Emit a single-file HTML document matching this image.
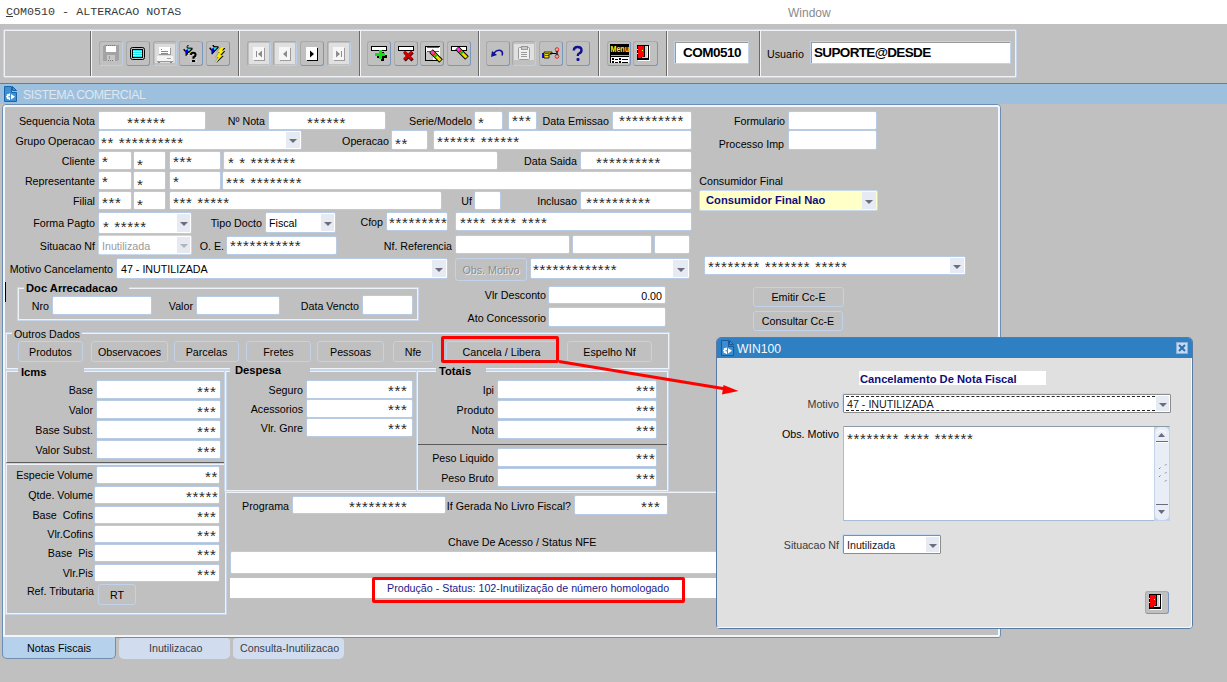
<!DOCTYPE html><html><head><meta charset="utf-8"><style>
*{margin:0;padding:0;box-sizing:border-box}
body{width:1227px;height:682px;overflow:hidden;background:#c0c0c0;position:relative;font-family:"Liberation Sans",sans-serif;font-size:10.7px;color:#000}
div{position:absolute}
.lb,.tx{white-space:pre;line-height:13px;font-size:10.7px}
.b{font-weight:bold;font-size:11.2px}
.st{white-space:pre;line-height:13px;font-size:15px;letter-spacing:0.65px;color:#2a2a2a}
.fd{background:#fff;border:1px solid #b7cbe4;border-radius:2px}
.ar{background:#e6eaf2}
.ar i{position:absolute;left:50%;top:50%;margin-left:-4px;margin-top:-1px;width:0;height:0;border-left:4px solid transparent;border-right:4px solid transparent;border-top:4px solid #6c6c7c}
.bt{border:1px solid #c0d3ea;border-radius:3px;text-align:center;white-space:pre;font-size:10.7px}
.tb{border:1px solid;border-color:#a9a9a9 #bccfe7 #bccfe7 #a9a9a9;border-radius:3px}
.tb.en{border-color:#a9a9a9 #7a98bd #7a98bd #a9a9a9}
.sep{width:2px;background:#6e6e6e;border-right:1px solid #f0f0f0}
.frl{border:1px solid #eef3fa;box-shadow:0 0 0 1px #c7d6ea}
</style></head><body>
<div class="" style="left:0px;top:0px;width:1227px;height:24px;background:#fff"></div>
<div style="left:6px;top:4px;font:11.7px 'Liberation Mono';line-height:16px;white-space:pre;color:#3a3a3a"><span style="text-decoration:underline">C</span>OM0510 - ALTERACAO NOTAS</div>
<div style="left:788px;top:6px;font-size:12px;line-height:15px;color:#8a8a8a">Window</div>
<div class="" style="left:3px;top:29px;width:1014px;height:49px;border:1px solid #c6d6ec;border-radius:2px"></div>
<div class="" style="left:4px;top:30px;width:1012px;height:47px;border:1px solid #eef2f8"></div>
<div style="left:90px;top:31px;width:1px;height:45px;background:#6a6a6a"></div><div style="left:91px;top:31px;width:1px;height:45px;background:#f4f4f4"></div>
<div style="left:238px;top:31px;width:1px;height:45px;background:#6a6a6a"></div><div style="left:239px;top:31px;width:1px;height:45px;background:#f4f4f4"></div>
<div style="left:359px;top:31px;width:1px;height:45px;background:#6a6a6a"></div><div style="left:360px;top:31px;width:1px;height:45px;background:#f4f4f4"></div>
<div style="left:478px;top:31px;width:1px;height:45px;background:#6a6a6a"></div><div style="left:479px;top:31px;width:1px;height:45px;background:#f4f4f4"></div>
<div style="left:598px;top:31px;width:1px;height:45px;background:#6a6a6a"></div><div style="left:599px;top:31px;width:1px;height:45px;background:#f4f4f4"></div>
<div style="left:666px;top:31px;width:1px;height:45px;background:#6a6a6a"></div><div style="left:667px;top:31px;width:1px;height:45px;background:#f4f4f4"></div>
<div style="left:759px;top:31px;width:1px;height:45px;background:#6a6a6a"></div><div style="left:760px;top:31px;width:1px;height:45px;background:#f4f4f4"></div>
<div class="tb" style="left:99px;top:41px;width:24px;height:25px"><svg style="position:absolute;left:-1px;top:-1px" width="24" height="25" shape-rendering="crispEdges">
<rect x="4" y="4" width="16" height="16" fill="#a3a3a3"/>
<rect x="4" y="4" width="1" height="1" fill="#c0c0c0"/><rect x="19" y="19" width="1" height="1" fill="#c0c0c0"/>
<rect x="7" y="5" width="10" height="6" fill="#fff"/>
<rect x="7" y="4" width="1" height="1" fill="#777"/><rect x="9" y="4" width="1" height="1" fill="#777"/><rect x="11" y="4" width="1" height="1" fill="#777"/><rect x="13" y="4" width="1" height="1" fill="#777"/><rect x="15" y="4" width="1" height="1" fill="#777"/>
<rect x="8" y="14" width="8" height="6" fill="#c6c6c6"/>
<rect x="10" y="15" width="1" height="3" fill="#9a9a9a"/>
<rect x="9" y="19" width="1" height="1" fill="#777"/><rect x="11" y="19" width="1" height="1" fill="#777"/><rect x="13" y="19" width="1" height="1" fill="#777"/>
</svg></div>
<div class="tb en" style="left:126px;top:41px;width:24px;height:25px"><svg style="position:absolute;left:-1px;top:-1px" width="24" height="25" shape-rendering="crispEdges">
<rect x="4.5" y="6.5" width="14" height="12" rx="2" fill="#c0c0c0" stroke="#000" shape-rendering="auto"/>
<rect x="6" y="8" width="11" height="9" fill="#000"/>
<rect x="7" y="9" width="9" height="7" fill="#18e8f0"/>
<path d="M7 10h9M7 12h9M7 14h9" stroke="#c8f0f4" stroke-width="1"/>
</svg></div>
<div class="tb" style="left:153px;top:41px;width:24px;height:25px"><svg style="position:absolute;left:-1px;top:-1px" width="24" height="25" shape-rendering="crispEdges">
<rect x="2" y="3" width="20" height="19" fill="#dcdcdc"/>
<rect x="6" y="6" width="11" height="8" fill="#fff"/>
<rect x="17" y="7" width="1" height="7" fill="#9a9a9a"/><rect x="6" y="13" width="12" height="1" fill="#9a9a9a"/>
<rect x="8" y="8" width="1" height="1" fill="#888"/><rect x="8" y="10" width="7" height="1" fill="#888"/><rect x="8" y="12" width="7" height="1" fill="#888"/>
<rect x="4" y="15" width="16" height="5" fill="#f4f4f4"/>
<rect x="4" y="20" width="16" height="1" fill="#9a9a9a"/>
<rect x="5" y="21" width="2" height="1" fill="#888"/><rect x="17" y="21" width="2" height="1" fill="#888"/>
<rect x="14" y="17" width="4" height="1" fill="#a0a0a0"/>
</svg></div>
<div class="tb en" style="left:179px;top:41px;width:24px;height:25px"><svg style="position:absolute;left:-1px;top:-1px" width="24" height="25" shape-rendering="crispEdges"><g transform="translate(6.3,8.2)">
<g shape-rendering="auto">
<path d="M-1.6 0 L0.2 2.2" stroke="#000" stroke-width="1.4"/>
<path d="M1.2 -2.2 L2.8 -2.2" stroke="#000" stroke-width="1.2"/>
<polygon points="-0.3,1.6 2.2,-0.3 3.8,2.6 0.4,6.2" fill="#0000f0"/>
<polygon points="1.8,-0.9 7.2,-0.7 3.8,2.6" fill="#00f0f8"/>
<path d="M0.4 6.4 L7.2 -0.7 M1.8 -1.2 L7.2 -1" stroke="#000" stroke-width="1.1"/>
</g>

<rect x="2" y="-4" width="1.2" height="1.2" fill="#f00"/>
</g>
<g fill="#ffee00">
<rect x="9" y="12" width="1" height="1"/><rect x="11" y="11" width="1" height="1"/><rect x="17" y="12" width="1" height="1"/>
<rect x="9" y="14" width="1" height="1"/><rect x="11" y="14" width="1" height="1"/><rect x="15" y="14" width="1" height="1"/><rect x="17" y="14" width="1" height="1"/>
<rect x="9" y="16" width="1" height="1"/><rect x="11" y="16" width="1" height="1"/><rect x="15" y="16" width="1" height="1"/><rect x="17" y="16" width="1" height="1"/>
<rect x="11" y="18" width="1" height="1"/><rect x="15" y="18" width="1" height="1"/><rect x="17" y="18" width="1" height="1"/>
<rect x="11" y="20" width="1" height="1"/><rect x="13" y="20" width="1" height="1"/><rect x="15" y="20" width="1" height="1"/><rect x="17" y="20" width="1" height="1"/>
</g>
<path d="M11.8 13.8 Q12 11.8 14.2 11.8 Q16.6 11.8 16.6 13.8 Q16.6 15.3 14.5 16.2 L14.5 17.8" fill="none" stroke="#000" stroke-width="2.1" shape-rendering="auto"/>
<rect x="13" y="19" width="3" height="2" fill="#000"/>
</svg></div>
<div class="tb en" style="left:206px;top:41px;width:24px;height:25px"><svg style="position:absolute;left:-1px;top:-1px" width="24" height="25" shape-rendering="crispEdges"><g transform="translate(5.3,6.8)">
<g shape-rendering="auto">
<path d="M-1.6 0 L0.2 2.2" stroke="#000" stroke-width="1.4"/>
<path d="M1.2 -2.2 L2.8 -2.2" stroke="#000" stroke-width="1.2"/>
<polygon points="-0.3,1.6 2.2,-0.3 3.8,2.6 0.4,6.2" fill="#0000f0"/>
<polygon points="1.8,-0.9 7.2,-0.7 3.8,2.6" fill="#00f0f8"/>
<path d="M0.4 6.4 L7.2 -0.7 M1.8 -1.2 L7.2 -1" stroke="#000" stroke-width="1.1"/>
</g>
</g>
<g shape-rendering="auto">
<polygon points="15,6.3 18.5,6.3 16,9.5 18.4,9.6 14.3,14 16.8,14.4 9.4,21.4 12.6,16.5 10.1,16.5 13.6,11.2 11.2,11.4" fill="#8a8aa0" transform="translate(-1.3,0)" opacity="0.6"/>
<polygon points="15,6.3 18.5,6.3 16,9.5 18.4,9.6 14.3,14 16.8,14.4 9.4,21.4 12.6,16.5 10.1,16.5 13.6,11.2 11.2,11.4" fill="#000" transform="translate(0.9,0.6)"/>
<polygon points="15,6.3 18.5,6.3 16,9.5 18.4,9.6 14.3,14 16.8,14.4 9.4,21.4 12.6,16.5 10.1,16.5 13.6,11.2 11.2,11.4" fill="#ffee00"/>
</g>
</svg></div>
<div class="tb" style="left:247px;top:41px;width:24px;height:25px"><svg style="position:absolute;left:-1px;top:-1px" width="24" height="25" shape-rendering="crispEdges"><rect x="2" y="2" width="20" height="21" fill="#e0e0e0"/><rect x="6" y="6" width="11" height="13" fill="#f6f6f6"/><rect x="17" y="7" width="1" height="13" fill="#9c9c9c"/><rect x="7" y="19" width="11" height="1" fill="#9c9c9c"/><rect x="9" y="10" width="1" height="6" fill="#8c8c8c"/><polygon points="15,9.5 15,16.5 11,13" fill="#8c8c8c" shape-rendering="auto"/></svg></div>
<div class="tb" style="left:273px;top:41px;width:24px;height:25px"><svg style="position:absolute;left:-1px;top:-1px" width="24" height="25" shape-rendering="crispEdges"><rect x="2" y="2" width="20" height="21" fill="#e0e0e0"/><rect x="6" y="6" width="11" height="13" fill="#f6f6f6"/><rect x="17" y="7" width="1" height="13" fill="#9c9c9c"/><rect x="7" y="19" width="11" height="1" fill="#9c9c9c"/><polygon points="14,9.5 14,16.5 10,13" fill="#8c8c8c" shape-rendering="auto"/></svg></div>
<div class="tb en" style="left:300px;top:41px;width:24px;height:25px"><svg style="position:absolute;left:-1px;top:-1px" width="24" height="25" shape-rendering="crispEdges"><rect x="6" y="6" width="11" height="13" fill="#fff"/><rect x="17" y="7" width="1" height="13" fill="#000"/><rect x="7" y="19" width="11" height="1" fill="#000"/><polygon points="10,9.5 10,16.5 14,13" fill="#000" shape-rendering="auto"/></svg></div>
<div class="tb" style="left:327px;top:41px;width:24px;height:25px"><svg style="position:absolute;left:-1px;top:-1px" width="24" height="25" shape-rendering="crispEdges"><rect x="2" y="2" width="20" height="21" fill="#e0e0e0"/><rect x="6" y="6" width="11" height="13" fill="#f6f6f6"/><rect x="17" y="7" width="1" height="13" fill="#9c9c9c"/><rect x="7" y="19" width="11" height="1" fill="#9c9c9c"/><rect x="14" y="10" width="1" height="6" fill="#8c8c8c"/><polygon points="9,9.5 9,16.5 13,13" fill="#8c8c8c" shape-rendering="auto"/></svg></div>
<div class="tb en" style="left:367px;top:41px;width:24px;height:25px"><svg style="position:absolute;left:-1px;top:-1px" width="24" height="25" shape-rendering="crispEdges"><rect x="4" y="5" width="16" height="5" fill="#000"/><rect x="5" y="6" width="14" height="3" fill="#fff"/>
<path d="M9 14.5h10M14 10v9" stroke="#000" stroke-width="3" transform="translate(1,1)"/>
<path d="M8 13.5h10M13 9v9" stroke="#10e010" stroke-width="3"/>
</svg></div>
<div class="tb en" style="left:394px;top:41px;width:24px;height:25px"><svg style="position:absolute;left:-1px;top:-1px" width="24" height="25" shape-rendering="crispEdges"><rect x="4" y="5" width="16" height="5" fill="#000"/><rect x="5" y="6" width="14" height="3" fill="#fff"/>
<path d="M10 10.5 L18 18.5 M18 10.5 L10 18.5" stroke="#300" stroke-width="3.2" shape-rendering="auto" transform="translate(0.6,0.8)"/>
<path d="M10 10.5 L18 18.5 M18 10.5 L10 18.5" stroke="#d00000" stroke-width="2.6" shape-rendering="auto"/>
</svg></div>
<div class="tb en" style="left:420px;top:41px;width:24px;height:25px"><svg style="position:absolute;left:-1px;top:-1px" width="24" height="25" shape-rendering="crispEdges">
<rect x="5" y="5" width="15" height="15" fill="#fff"/>
<path d="M5.5 5 V20 M5 5.5 H20" stroke="#000"/><rect x="5" y="19" width="15" height="1" fill="#000"/>
<rect x="7" y="6" width="12" height="1" fill="#108080"/><rect x="7" y="10" width="12" height="1" fill="#108080"/>
<rect x="6" y="11" width="7" height="8" fill="#c8c8c8"/>
<g transform="translate(11,10)">
<g shape-rendering="auto">
<path d="M0 0 L10 10" stroke="#000" stroke-width="5"/>
<path d="M0.5 0.5 L9.5 9.5" stroke="#f0e000" stroke-width="3"/>
<path d="M0.5 0.5 L2.5 2.5" stroke="#ff30e0" stroke-width="3"/>
<path d="M2.5 2.5 L4 4" stroke="#f02020" stroke-width="3"/>
<path d="M4 4 L5.5 5.5" stroke="#10c010" stroke-width="3"/>
</g></g></svg></div>
<div class="tb en" style="left:447px;top:41px;width:24px;height:25px"><svg style="position:absolute;left:-1px;top:-1px" width="24" height="25" shape-rendering="crispEdges"><rect x="4" y="5" width="16" height="5" fill="#000"/><rect x="5" y="6" width="14" height="3" fill="#fff"/><g transform="translate(10,7)">
<g shape-rendering="auto">
<path d="M0 0 L10 10" stroke="#000" stroke-width="5"/>
<path d="M0.5 0.5 L9.5 9.5" stroke="#f0e000" stroke-width="3"/>
<path d="M0.5 0.5 L2.5 2.5" stroke="#ff30e0" stroke-width="3"/>
<path d="M2.5 2.5 L4 4" stroke="#f02020" stroke-width="3"/>
<path d="M4 4 L5.5 5.5" stroke="#10c010" stroke-width="3"/>
</g></g></svg></div>
<div class="tb en" style="left:486px;top:41px;width:24px;height:25px"><svg style="position:absolute;left:-1px;top:-1px" width="24" height="25" shape-rendering="crispEdges">
<path d="M8 12 Q11 8.5 14.5 9.5 Q17.5 11 16 14.5" fill="none" stroke="#10109a" stroke-width="1.6" shape-rendering="auto"/>
<polygon points="5,16 6,10 11,14" fill="#10109a" shape-rendering="auto"/>
</svg></div>
<div class="tb" style="left:512px;top:41px;width:24px;height:25px"><svg style="position:absolute;left:-1px;top:-1px" width="24" height="25" shape-rendering="crispEdges">
<rect x="2" y="3" width="20" height="16" fill="#e0e0e0"/>
<rect x="6.5" y="6.5" width="11" height="12" rx="1" fill="#f0f0f0" stroke="#9a9a9a" shape-rendering="auto"/>
<rect x="9" y="5" width="6" height="3" fill="#c8c8c8" stroke="#8a8a8a" stroke-width="0.8"/>
<path d="M9 11h6M9 13h6M9 15h6" stroke="#9a9a9a"/>
</svg></div>
<div class="tb en" style="left:539px;top:41px;width:24px;height:25px"><svg style="position:absolute;left:-1px;top:-1px" width="24" height="25" shape-rendering="crispEdges">
<rect x="3" y="12" width="2" height="5" fill="#1010e0"/>
<path d="M5 11 h8 v2 h-3 v4 h-5 z" fill="#f0e010" stroke="#000" stroke-width="0.8" shape-rendering="auto"/>
<path d="M6 12.5h4M6 14.5h4" stroke="#000" stroke-width="0.6"/>
<path d="M11 12.5 h6" stroke="#000" stroke-width="1.2"/>
<circle cx="18" cy="8.5" r="1.8" fill="none" stroke="#f02020" stroke-width="1" shape-rendering="auto"/>
<circle cx="18" cy="15.5" r="1.8" fill="none" stroke="#f02020" stroke-width="1" shape-rendering="auto"/>
<path d="M17 10 L19 14 M19 10 L17 14" stroke="#000" stroke-width="0.8" shape-rendering="auto"/>
</svg></div>
<div class="tb en" style="left:566px;top:41px;width:24px;height:25px"><svg style="position:absolute;left:-1px;top:-1px" width="24" height="25" shape-rendering="crispEdges">
<path d="M7.8 9.5 Q8 6 11.5 6 Q15.5 6 15.5 9.2 Q15.5 11.5 13 12.5 Q11.8 13 11.8 15" fill="none" stroke="#101090" stroke-width="2.4" shape-rendering="auto"/>
<rect x="10.5" y="17" width="3" height="3" rx="1" fill="#101090" shape-rendering="auto"/>
</svg></div>
<div class="tb en" style="left:607px;top:41px;width:24px;height:25px"><svg style="position:absolute;left:-1px;top:-1px" width="24" height="25" shape-rendering="crispEdges">
<rect x="3" y="3" width="19" height="10" fill="#000"/>
<text x="3.5" y="11.3" font-family="Liberation Sans" font-weight="bold" font-size="9.8" fill="#f8f000" textLength="18.5" lengthAdjust="spacingAndGlyphs">Menu</text>
<rect x="3" y="13" width="19" height="1" fill="#000"/>
<rect x="4" y="14" width="18" height="1" fill="#10e8f0"/><rect x="3" y="14" width="1" height="1" fill="#000"/>
<rect x="3" y="15" width="19" height="1" fill="#000"/>
<rect x="3" y="16" width="1" height="6" fill="#000"/>
<rect x="4" y="16" width="18" height="6" fill="#fff"/>
<rect x="5" y="17" width="2" height="2" fill="#000"/><rect x="12" y="17" width="2" height="2" fill="#000"/>
<rect x="8" y="18" width="3" height="1" fill="#000"/><rect x="15" y="18" width="6" height="1" fill="#000"/>
<rect x="5" y="20" width="2" height="2" fill="#000"/><rect x="12" y="20" width="2" height="2" fill="#000"/>
<rect x="8" y="21" width="3" height="1" fill="#000"/><rect x="15" y="21" width="6" height="1" fill="#000"/>
</svg></div>
<div class="tb en" style="left:633px;top:41px;width:25px;height:25px"><svg style="position:absolute;left:-1px;top:-1px" width="24" height="25" shape-rendering="crispEdges">
<rect x="4" y="4" width="12" height="15" fill="#000"/>
<rect x="16" y="5" width="1" height="15" fill="#fff"/><rect x="5" y="19" width="12" height="1" fill="#fff"/>
<rect x="12" y="5" width="3" height="12" fill="#d0d0d0"/>
<rect x="14" y="5" width="1" height="12" fill="#f4f4f4"/>
<rect x="9" y="16" width="6" height="1" fill="#d0d0d0"/>
<polygon points="5,5 11,5 11,15 10,15 10,16 8,16 8,17 5,17" fill="#ff0000"/>
<rect x="9" y="9" width="1" height="1" fill="#ffff00"/>
<rect x="4" y="8" width="1" height="1" fill="#ffff00"/><rect x="4" y="12" width="1" height="1" fill="#ffff00"/>
</svg></div>
<div class="fd" style="left:674px;top:41px;width:75px;height:23px;border-color:#c2d4ea;border-radius:1px;box-shadow:inset 1px 1px 0 #9a9a9a"></div>
<div style="left:675px;top:45px;width:74px;text-align:center;font-weight:bold;font-size:13.5px;letter-spacing:-0.5px;line-height:15px">COM0510</div>
<div style="left:767px;top:48px;font-size:10.7px;line-height:13px">Usuario</div>
<div class="fd" style="left:810px;top:41px;width:201px;height:23px;border-color:#c2d4ea;border-radius:1px;box-shadow:inset 1px 1px 0 #9a9a9a"></div>
<div style="left:814px;top:45px;font-weight:bold;font-size:13.5px;letter-spacing:-0.65px;line-height:15px">SUPORTE@DESDE</div>
<div class="" style="left:0px;top:83px;width:1227px;height:21px;background:#9ec0df;border-top:1px solid #5b7fa8"></div>
<svg style="position:absolute;left:4px;top:86px" width="14" height="16" viewBox="0 0 14 16"><path d="M0.5 0.5 H7.5 V6.5 H12.5 V15.5 H0.5 Z" fill="#3b90d8" stroke="#1a64a8"/><path d="M8.5 0.5 L12.5 4.5 H8.5 Z" fill="#3b90d8" stroke="#1a64a8"/><g fill="#fff"><path d="M6 7.5 L6 14 L4.8 14 L4.5 13 L3.3 13.3 L2.6 12.5 L3 11.5 L2 11 L2 10 L3 9.6 L2.7 8.6 L3.4 7.9 L4.5 8.3 L4.8 7.5 Z"/><circle cx="5.2" cy="10.8" r="0.8" fill="#3b90d8"/><path d="M7 8 L11 10.8 L7 13.5 Z"/></g></svg>
<div style="left:23px;top:88px;font-size:12.4px;letter-spacing:-0.5px;line-height:14px;color:#dfe6ee;white-space:pre">SISTEMA COMERCIAL</div>
<div class="" style="left:2px;top:104px;width:999px;height:534px;border:1px solid #6d8db5;border-radius:4px 4px 3px 0"></div>
<div class="" style="left:3px;top:105px;width:997px;height:532px;border:2px solid #f2f5fa;border-radius:3px 3px 2px 0"></div>
<div class="lb" style="right:1132px;top:115px;">Sequencia Nota</div>
<div class="fd" style="left:98px;top:111px;width:108px;height:19px;"></div>
<div class="st" style="left:127px;top:116px;">******</div>
<div class="lb" style="right:962px;top:115px;">Nº Nota</div>
<div class="fd" style="left:268px;top:111px;width:118px;height:19px;"></div>
<div class="st" style="left:307px;top:116px;">******</div>
<div class="lb" style="right:755px;top:115px;">Serie/Modelo</div>
<div class="fd" style="left:474px;top:111px;width:29px;height:19px;"></div>
<div class="st" style="left:478px;top:116px;">*</div>
<div class="fd" style="left:508px;top:111px;width:29px;height:19px;"></div>
<div class="st" style="left:512px;top:114px;">***</div>
<div class="lb" style="right:618px;top:115px;">Data Emissao</div>
<div class="fd" style="left:612px;top:111px;width:80px;height:19px;"></div>
<div class="st" style="left:619px;top:114px;">**********</div>
<div class="lb" style="right:442px;top:115px;">Formulario</div>
<div class="fd" style="left:788px;top:111px;width:89px;height:19px;"></div>
<div class="lb" style="right:1132px;top:135px;">Grupo Operacao</div>
<div class="fd" style="left:98px;top:130px;width:204px;height:20px;"></div>
<div class="ar" style="left:286px;top:132px;width:14px;height:16px;"><i style="border-top-color:#6c6c7c"></i></div>
<div class="st" style="left:101px;top:136px;">** **********</div>
<div class="lb" style="right:838px;top:135px;">Operacao</div>
<div class="fd" style="left:391px;top:130px;width:37px;height:20px;"></div>
<div class="st" style="left:395px;top:137px;">**</div>
<div class="fd" style="left:433px;top:130px;width:259px;height:20px;"></div>
<div class="st" style="left:437px;top:135px;">****** ******</div>
<div class="lb" style="right:443px;top:138px;">Processo Imp</div>
<div class="fd" style="left:788px;top:130px;width:89px;height:20px;"></div>
<div class="lb" style="right:1132px;top:155px;">Cliente</div>
<div class="fd" style="left:98px;top:151px;width:34px;height:19px;"></div>
<div class="st" style="left:102px;top:155px;">*</div>
<div class="fd" style="left:133px;top:151px;width:33px;height:19px;"></div>
<div class="st" style="left:137px;top:158px;">*</div>
<div class="fd" style="left:169px;top:151px;width:52px;height:19px;"></div>
<div class="st" style="left:173px;top:155px;">***</div>
<div class="fd" style="left:223px;top:151px;width:275px;height:19px;"></div>
<div class="st" style="left:228px;top:156px;">* * *******</div>
<div class="lb" style="right:650px;top:155px;">Data Saida</div>
<div class="fd" style="left:580px;top:151px;width:112px;height:19px;"></div>
<div class="st" style="left:596px;top:156px;">**********</div>
<div class="lb" style="right:1132px;top:175px;">Representante</div>
<div class="fd" style="left:98px;top:171px;width:34px;height:19px;"></div>
<div class="st" style="left:102px;top:175px;">*</div>
<div class="fd" style="left:133px;top:171px;width:33px;height:19px;"></div>
<div class="st" style="left:137px;top:178px;">*</div>
<div class="fd" style="left:169px;top:171px;width:52px;height:19px;"></div>
<div class="st" style="left:173px;top:175px;">*</div>
<div class="fd" style="left:222px;top:171px;width:470px;height:19px;"></div>
<div class="st" style="left:226px;top:176px;">*** ********</div>
<div class="lb" style="right:444px;top:175px;">Consumidor Final</div>
<div class="lb" style="right:1132px;top:195px;">Filial</div>
<div class="fd" style="left:98px;top:191px;width:34px;height:19px;"></div>
<div class="st" style="left:102px;top:196px;">***</div>
<div class="fd" style="left:133px;top:191px;width:33px;height:19px;"></div>
<div class="st" style="left:137px;top:198px;">*</div>
<div class="fd" style="left:169px;top:191px;width:273px;height:19px;"></div>
<div class="st" style="left:173px;top:196px;">*** *****</div>
<div class="lb" style="right:755px;top:195px;">Uf</div>
<div class="fd" style="left:474px;top:191px;width:27px;height:19px;"></div>
<div class="lb" style="right:650px;top:195px;">Inclusao</div>
<div class="fd" style="left:580px;top:191px;width:112px;height:19px;"></div>
<div class="st" style="left:586px;top:196px;">**********</div>
<div class="fd" style="left:699px;top:190px;width:179px;height:21px;background:#ffffc8;border-color:#c9d8ea"></div>
<div class="ar" style="left:862px;top:192px;width:14px;height:17px;"><i style="border-top-color:#6c6c7c"></i></div>
<div class="tx b" style="left:706px;top:194px;color:#0e0e7a">Consumidor Final Nao</div>
<div class="lb" style="right:1132px;top:217px;">Forma Pagto</div>
<div class="fd" style="left:98px;top:212px;width:94px;height:22px;"></div>
<div class="ar" style="left:177px;top:214px;width:13px;height:18px;"><i style="border-top-color:#6c6c7c"></i></div>
<div class="st" style="left:103px;top:220px;">* *****</div>
<div class="lb" style="right:965px;top:217px;">Tipo Docto</div>
<div class="fd" style="left:265px;top:212px;width:71px;height:21px;"></div>
<div class="ar" style="left:321px;top:214px;width:13px;height:17px;"><i style="border-top-color:#6c6c7c"></i></div>
<div class="tx" style="left:269px;top:217px;">Fiscal</div>
<div class="lb" style="right:844px;top:216px;">Cfop</div>
<div class="fd" style="left:386px;top:212px;width:62px;height:19px;"></div>
<div class="st" style="left:389px;top:216px;">*********</div>
<div class="fd" style="left:455px;top:212px;width:237px;height:19px;"></div>
<div class="st" style="left:460px;top:216px;">**** **** ****</div>
<div class="lb" style="right:1132px;top:240px;">Situacao Nf</div>
<div class="fd" style="left:98px;top:235px;width:94px;height:20px;border-color:#c9d8ea"></div>
<div class="ar" style="left:177px;top:237px;width:13px;height:16px;background:#e6e9ef"><i style="border-top-color:#b4b4bc"></i></div>
<div class="tx" style="left:102px;top:240px;color:#9a9a9a">Inutilizada</div>
<style>.dis i{border-top-color:#b8b8c0!important}</style>
<div class="lb" style="right:1003px;top:240px;">O. E.</div>
<div class="fd" style="left:226px;top:236px;width:111px;height:19px;"></div>
<div class="st" style="left:230px;top:239px;">***********</div>
<div class="lb" style="right:775px;top:240px;">Nf. Referencia</div>
<div class="fd" style="left:455px;top:235px;width:115px;height:19px;"></div>
<div class="fd" style="left:572px;top:235px;width:80px;height:19px;"></div>
<div class="fd" style="left:654px;top:235px;width:36px;height:19px;"></div>
<div class="lb" style="right:1114px;top:263px;">Motivo Cancelamento</div>
<div class="fd" style="left:116px;top:258px;width:332px;height:21px;"></div>
<div class="ar" style="left:432px;top:260px;width:14px;height:17px;"><i style="border-top-color:#6c6c7c"></i></div>
<div class="tx" style="left:121px;top:263px;">47 - INUTILIZADA</div>
<div class="bt" style="left:455px;top:258px;width:72px;height:23px;line-height:22px;border-color:#c0d3ea"><span style="color:#8c8c8c;text-shadow:1px 1px 0 #ececec">Obs. Motivo</span></div>
<div class="fd" style="left:530px;top:258px;width:160px;height:21px;"></div>
<div class="ar" style="left:673px;top:260px;width:15px;height:17px;"><i style="border-top-color:#6c6c7c"></i></div>
<div class="st" style="left:533px;top:263px;">*************</div>
<div class="fd" style="left:704px;top:256px;width:262px;height:19px;"></div>
<div class="ar" style="left:950px;top:258px;width:14px;height:15px;"><i style="border-top-color:#6c6c7c"></i></div>
<div class="st" style="left:708px;top:260px;">******** ******* *****</div>
<div class="" style="left:5px;top:282px;width:1px;height:20px;background:#000"></div>
<div class="frl" style="left:18px;top:288px;width:400px;height:32px;"></div>
<div style="left:24px;top:281px;width:105px;height:14px;background:#c0c0c0"></div>
<div class="tx b" style="left:26px;top:282px;">Doc Arrecadacao</div>
<div class="lb" style="right:1178px;top:300px;">Nro</div>
<div class="fd" style="left:52px;top:296px;width:100px;height:19px;"></div>
<div class="lb" style="right:1034px;top:300px;">Valor</div>
<div class="fd" style="left:196px;top:296px;width:84px;height:19px;"></div>
<div class="lb" style="right:868px;top:300px;">Data Vencto</div>
<div class="fd" style="left:362px;top:295px;width:51px;height:20px;"></div>
<div class="lb" style="right:681px;top:289px;">Vlr Desconto</div>
<div class="fd" style="left:548px;top:286px;width:118px;height:18px;"></div>
<div class="tx" style="left:0px;top:290px;width:662px;text-align:right">0.00</div>
<div class="lb" style="right:681px;top:312px;">Ato Concessorio</div>
<div class="fd" style="left:548px;top:307px;width:118px;height:20px;"></div>
<div class="bt" style="left:753px;top:287px;width:91px;height:20px;line-height:19px;"><span style="">Emitir Cc-E</span></div>
<div class="bt" style="left:753px;top:311px;width:90px;height:20px;line-height:19px;"><span style="">Consultar Cc-E</span></div>
<div class="frl" style="left:6px;top:333px;width:663px;height:36px;"></div>
<div style="left:12px;top:327px;width:70px;height:12px;background:#c0c0c0"></div>
<div class="tx" style="left:14px;top:328px;">Outros Dados</div>
<div class="bt" style="left:18px;top:341px;width:65px;height:21px;line-height:20px;"><span style="">Produtos</span></div>
<div class="bt" style="left:91px;top:341px;width:77px;height:21px;line-height:20px;"><span style="">Observacoes</span></div>
<div class="bt" style="left:174px;top:341px;width:65px;height:21px;line-height:20px;"><span style="">Parcelas</span></div>
<div class="bt" style="left:246px;top:341px;width:65px;height:21px;line-height:20px;"><span style="">Fretes</span></div>
<div class="bt" style="left:317px;top:341px;width:67px;height:21px;line-height:20px;"><span style="">Pessoas</span></div>
<div class="bt" style="left:393px;top:341px;width:40px;height:21px;line-height:20px;"><span style="">Nfe</span></div>
<div class="bt" style="left:446px;top:341px;width:111px;height:21px;line-height:20px;"><span style="">Cancela / Libera</span></div>
<div class="bt" style="left:567px;top:341px;width:85px;height:21px;line-height:20px;"><span style="">Espelho Nf</span></div>
<div class="frl" style="left:6px;top:371px;width:220px;height:92px;border-bottom:1px solid #5c5c5c"></div>
<div style="left:18px;top:364px;width:66px;height:12px;background:#c0c0c0"></div>
<div class="tx b" style="left:21px;top:366px;">Icms</div>
<div class="lb" style="right:1134px;top:384px;">Base</div>
<div class="fd" style="left:96px;top:380px;width:125px;height:19px;"></div>
<div class="st" style="left:197px;top:385px;">***</div>
<div class="lb" style="right:1134px;top:404px;">Valor</div>
<div class="fd" style="left:96px;top:400px;width:125px;height:19px;"></div>
<div class="st" style="left:197px;top:405px;">***</div>
<div class="lb" style="right:1134px;top:424px;">Base Subst.</div>
<div class="fd" style="left:96px;top:420px;width:125px;height:19px;"></div>
<div class="st" style="left:197px;top:425px;">***</div>
<div class="lb" style="right:1134px;top:444px;">Valor Subst.</div>
<div class="fd" style="left:96px;top:440px;width:125px;height:19px;"></div>
<div class="st" style="left:197px;top:445px;">***</div>
<div class="frl" style="left:6px;top:464px;width:220px;height:150px;"></div>
<div class="lb" style="right:1134px;top:469px;">Especie Volume</div>
<div class="fd" style="left:96px;top:466px;width:124px;height:18px;"></div>
<div class="lb" style="right:1134px;top:489px;">Qtde. Volume</div>
<div class="fd" style="left:94px;top:486px;width:126px;height:18px;"></div>
<div class="lb" style="right:1134px;top:509px;">Base  Cofins</div>
<div class="fd" style="left:94px;top:506px;width:126px;height:18px;"></div>
<div class="lb" style="right:1134px;top:528px;">Vlr.Cofins</div>
<div class="fd" style="left:94px;top:525px;width:126px;height:18px;"></div>
<div class="lb" style="right:1134px;top:547px;">Base  Pis</div>
<div class="fd" style="left:94px;top:544px;width:126px;height:18px;"></div>
<div class="lb" style="right:1134px;top:567px;">Vlr.Pis</div>
<div class="fd" style="left:94px;top:564px;width:126px;height:18px;"></div>
<div class="st" style="left:205px;top:470px;">**</div>
<div class="st" style="left:186px;top:490px;">*****</div>
<div class="st" style="left:197px;top:510px;">***</div>
<div class="st" style="left:197px;top:529px;">***</div>
<div class="st" style="left:197px;top:548px;">***</div>
<div class="st" style="left:197px;top:568px;">***</div>
<div class="lb" style="right:1133px;top:585px;">Ref. Tributaria</div>
<div class="bt" style="left:98px;top:584px;width:38px;height:21px;line-height:20px;"><span style="">RT</span></div>
<div class="frl" style="left:225px;top:371px;width:192px;height:120px;"></div>
<div style="left:230px;top:364px;width:80px;height:12px;background:#c0c0c0"></div>
<div class="tx b" style="left:235px;top:364px;">Despesa</div>
<div class="lb" style="right:924px;top:384px;">Seguro</div>
<div class="fd" style="left:306px;top:380px;width:107px;height:19px;"></div>
<div class="st" style="left:388px;top:384px;">***</div>
<div class="lb" style="right:924px;top:403px;">Acessorios</div>
<div class="fd" style="left:306px;top:399px;width:107px;height:19px;"></div>
<div class="st" style="left:388px;top:403px;">***</div>
<div class="lb" style="right:924px;top:422px;">Vlr. Gnre</div>
<div class="fd" style="left:306px;top:418px;width:107px;height:19px;"></div>
<div class="st" style="left:388px;top:422px;">***</div>
<div class="frl" style="left:417px;top:371px;width:251px;height:120px;"></div>
<div style="left:436px;top:364px;width:50px;height:12px;background:#c0c0c0"></div>
<div class="tx b" style="left:439px;top:365px;">Totais</div>
<div class="lb" style="right:733px;top:384px;">Ipi</div>
<div class="fd" style="left:497px;top:380px;width:160px;height:19px;"></div>
<div class="st" style="left:636px;top:384px;">***</div>
<div class="lb" style="right:733px;top:404px;">Produto</div>
<div class="fd" style="left:497px;top:400px;width:160px;height:19px;"></div>
<div class="st" style="left:636px;top:404px;">***</div>
<div class="lb" style="right:733px;top:424px;">Nota</div>
<div class="fd" style="left:497px;top:420px;width:160px;height:19px;"></div>
<div class="st" style="left:636px;top:424px;">***</div>
<div style="left:418px;top:444px;width:249px;height:1px;background:#5c5c5c"></div>
<div class="lb" style="right:733px;top:452px;">Peso Liquido</div>
<div class="fd" style="left:497px;top:448px;width:160px;height:19px;"></div>
<div class="st" style="left:636px;top:452px;">***</div>
<div class="lb" style="right:733px;top:472px;">Peso Bruto</div>
<div class="fd" style="left:497px;top:468px;width:160px;height:19px;"></div>
<div class="st" style="left:636px;top:472px;">***</div>
<div class="" style="left:225px;top:492px;width:775px;height:1px;background:#eef3fa;box-shadow:0 -1px 0 #c7d6ea"></div>
<div class="lb" style="right:938px;top:500px;">Programa</div>
<div class="fd" style="left:292px;top:496px;width:154px;height:18px;"></div>
<div class="st" style="left:349px;top:500px;">*********</div>
<div class="lb" style="right:656px;top:500px;">If Gerada No Livro Fiscal?</div>
<div class="fd" style="left:574px;top:495px;width:94px;height:20px;"></div>
<div class="st" style="left:641px;top:500px;">***</div>
<div class="tx" style="left:448px;top:536px;">Chave De Acesso / Status NFE</div>
<div class="fd" style="left:230px;top:551px;width:770px;height:23px;"></div>
<div class="" style="left:230px;top:578px;width:770px;height:20px;background:#fff"></div>
<div class="tx" style="left:387px;top:582px;color:#1a1a8c">Produção - Status: 102-Inutilização de número homologado</div>
<div style="left:2px;top:637px;width:114px;height:22px;background:#b5d1eb;border:1px solid #6f8db0;border-top:none;border-radius:0 0 5px 5px"></div>
<div class="tx" style="left:27px;top:642px;width:auto">Notas Fiscais</div>
<div class="" style="left:119px;top:638px;width:111px;height:21px;background:#d1ddee;border-radius:4px 4px 5px 5px"></div>
<div class="tx" style="left:149px;top:642px;color:#3c3c48">Inutilizacao</div>
<div class="" style="left:233px;top:638px;width:111px;height:21px;background:#d1ddee;border-radius:4px 4px 5px 5px"></div>
<div class="tx" style="left:240px;top:642px;color:#3c3c48">Consulta-Inutilizacao</div>
<div class="" style="left:441px;top:336px;width:118px;height:27px;border:3px solid #ff0000;border-radius:2px"></div>
<div class="" style="left:372px;top:577px;width:313px;height:26px;border:3px solid #ff0000;border-radius:2px"></div>
<div class="" style="left:716px;top:337px;width:477px;height:292px;background:#e0e0e0;border:1px solid #5a7aa6;border-radius:5px 5px 4px 4px;overflow:hidden"></div>
<div class="" style="left:717px;top:358px;width:475px;height:270px;border-right:1px solid #f6f8fb;border-bottom:1px solid #f6f8fb;border-radius:0 0 3px 0"></div>
<div class="" style="left:717px;top:338px;width:475px;height:20px;background:#2e80c3;border-radius:4px 4px 0 0"></div>
<svg style="position:absolute;left:721px;top:340px" width="14" height="16" viewBox="0 0 14 16"><path d="M0.5 0.5 H7.5 V6.5 H12.5 V15.5 H0.5 Z" fill="#3a8ed4" stroke="#1a5a98"/><path d="M8.5 0.5 L12.5 4.5 H8.5 Z" fill="#3a8ed4" stroke="#1a5a98"/><g fill="#fff"><path d="M6 7.5 L6 14 L4.8 14 L4.5 13 L3.3 13.3 L2.6 12.5 L3 11.5 L2 11 L2 10 L3 9.6 L2.7 8.6 L3.4 7.9 L4.5 8.3 L4.8 7.5 Z"/><circle cx="5.2" cy="10.8" r="0.8" fill="#3a8ed4"/><path d="M7 8 L11 10.8 L7 13.5 Z"/></g></svg>
<div style="left:737px;top:342px;font-size:12.2px;line-height:15px;color:#f4f8fc">WIN100</div>
<div class="" style="left:1176px;top:342px;width:12px;height:12px;background:#c5daf0;border:1px solid #8fb0d6"></div>
<svg style="position:absolute;left:1176px;top:342px" width="12" height="12"><path d="M3 3L9 9M9 3L3 9" stroke="#2e6fb0" stroke-width="2"/></svg>
<div class="" style="left:859px;top:371px;width:187px;height:14px;background:#fff"></div>
<div class="tx b" style="left:860px;top:373px;color:#0e0e7a">Cancelamento De Nota Fiscal</div>
<div class="lb" style="right:388px;top:398px;color:#3a3a3a">Motivo</div>
<div class="fd" style="left:843px;top:394px;width:328px;height:19px;border-color:#8c8c8c;border-radius:1px;box-shadow:-1px -1px 0 #c5d8ee"></div>
<div class="ar" style="left:1156px;top:396px;width:13px;height:15px;"><i style="border-top-color:#6c6c7c"></i></div>
<div class="" style="left:846px;top:396px;width:309px;height:15px;border-top:1px dashed #222;border-bottom:1px dashed #222"></div>
<div class="tx" style="left:847px;top:398px;color:#202020">47 - INUTILIZADA</div>
<div class="lb" style="right:388px;top:428px;">Obs. Motivo</div>
<div class="fd" style="left:843px;top:426px;width:327px;height:95px;border-color:#a9bcd4;border-top-color:#8f9aa8;border-radius:1px"></div>
<div class="st" style="left:847px;top:432px;">******** **** ******</div>
<svg style="position:absolute;left:1154px;top:427px" width="16" height="94" viewBox="0 0 16 94"><rect x="0" y="0" width="16" height="94" fill="#c3d3ea"/><rect x="1" y="0" width="14" height="93" rx="5" fill="#e9edf5"/><path d="M3 6 Q7.5 1 12 6" stroke="#fff" stroke-width="1.2" fill="none"/><polygon points="4,10 7.5,6 11,10" fill="#6a6a80"/><rect x="2" y="14" width="12" height="1" fill="#6a6a80"/><rect x="2" y="15" width="12" height="1" fill="#fff"/><rect x="2" y="77" width="12" height="1" fill="#6a6a80"/><polygon points="4,83 11,83 7.5,87" fill="#6a6a80"/><g stroke="#7080a8" stroke-width="1"><path d="M5 42l1.5-1.5M11 38.5l1.5-1.5M11 46.5l1.5-1.5M5 50l1.5-1.5M11 54.5l1.5-1.5"/></g></svg>
<div class="lb" style="right:388px;top:539px;color:#3a3a3a">Situacao Nf</div>
<div class="fd" style="left:843px;top:535px;width:98px;height:19px;border-color:#8c8c8c;border-radius:1px;box-shadow:-1px -1px 0 #c5d8ee"></div>
<div class="ar" style="left:926px;top:537px;width:13px;height:15px;"><i style="border-top-color:#6c6c7c"></i></div>
<div class="tx" style="left:847px;top:539px;color:#202020">Inutilizada</div>
<div class="" style="left:1145px;top:591px;width:24px;height:23px;background:#c0c0c0;border:1px solid;border-color:#a9a9a9 #7a98bd #7a98bd #a9a9a9;border-radius:3px"></div>
<svg style="position:absolute;left:1145px;top:590px" width="24" height="25" shape-rendering="crispEdges">
<rect x="4" y="4" width="12" height="15" fill="#000"/>
<rect x="16" y="5" width="1" height="15" fill="#fff"/><rect x="5" y="19" width="12" height="1" fill="#fff"/>
<rect x="12" y="5" width="3" height="12" fill="#d0d0d0"/>
<rect x="14" y="5" width="1" height="12" fill="#f4f4f4"/>
<rect x="9" y="16" width="6" height="1" fill="#d0d0d0"/>
<polygon points="5,5 11,5 11,15 10,15 10,16 8,16 8,17 5,17" fill="#ff0000"/>
<rect x="9" y="9" width="1" height="1" fill="#ffff00"/>
<rect x="4" y="8" width="1" height="1" fill="#ffff00"/><rect x="4" y="12" width="1" height="1" fill="#ffff00"/>
</svg>
<svg style="position:absolute;left:0;top:0" width="1227" height="682"><line x1="559" y1="361.5" x2="726" y2="389" stroke="#ff0000" stroke-width="3"/><path d="M738.5 391 L723.5 385 L722 394.5 Z" fill="#ff0000"/></svg>
</body></html>
